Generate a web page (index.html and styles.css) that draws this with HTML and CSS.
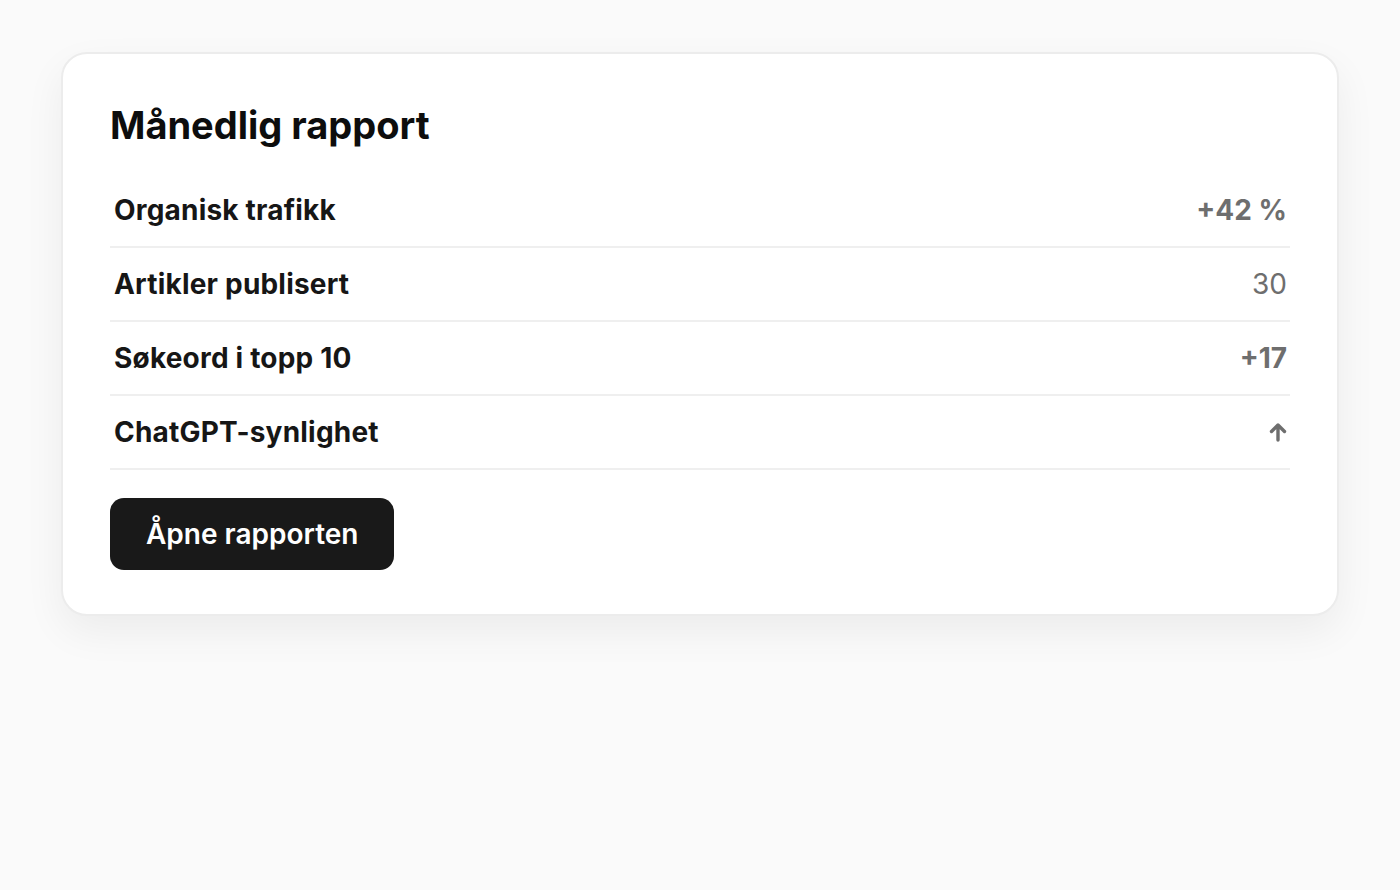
FILE: index.html
```html
<!DOCTYPE html>
<html lang="nb">
  <head>
    <meta charset="UTF-8" />
    <meta name="viewport" content="width=device-width, initial-scale=1.0" />
    <title>Månedlig rapport</title>
    <link rel="stylesheet" href="styles.css">
  </head>
  <body>
    <div class="report-card">
      <h1>Månedlig rapport</h1>

      <ul class="stats">
        <li class="stat-row">
          <span class="stat-label">Organisk trafikk</span>
          <span class="stat-value">+42 %</span>
        </li>
        <li class="stat-row">
          <span class="stat-label">Artikler publisert</span>
          <span class="stat-value light">30</span>
        </li>
        <li class="stat-row">
          <span class="stat-label">Søkeord i topp 10</span>
          <span class="stat-value">+17</span>
        </li>
        <li class="stat-row">
          <span class="stat-label">ChatGPT-synlighet</span>
          <span class="stat-value">
            <svg class="arrow-up" width="18" height="20" viewBox="0 0 18 20" fill="none">
              <path d="M9 18V3.5M2.5 9.5L9 3L15.5 9.5" stroke="currentColor" stroke-width="3.4" stroke-linecap="round" stroke-linejoin="round"/>
            </svg>
          </span>
        </li>
      </ul>

      <button type="button" class="open-btn">Åpne rapporten</button>
    </div>
  </body>
</html>
```

FILE: styles.css
```css
* {
  margin: 0;
  padding: 0;
  box-sizing: border-box;
}

body {
  font-family: Inter, "Noto Sans", sans-serif;
  background: #fafafa;
  color: #141414;
  padding: 52px 61px;
}

.report-card {
  background: #fff;
  border: 2px solid #ececec;
  border-radius: 26px;
  box-shadow: 0 16px 40px rgba(0, 0, 0, 0.06);
  padding: 47px 47px 44px;
}

h1 {
  font-size: 38px;
  font-weight: 700;
  letter-spacing: 0;
  line-height: 48px;
  color: #0d0d0d;
  margin-bottom: 25px;
}

.stats {
  list-style: none;
}

.stat-row {
  display: flex;
  justify-content: space-between;
  align-items: center;
  height: 74px;
  padding: 0 3px 0 4px;
  border-bottom: 2px solid #efefef;
}

.stat-label {
  font-size: 28px;
  font-weight: 700;
  letter-spacing: 0.2px;
  color: #161616;
}

.stat-value {
  font-size: 28px;
  font-weight: 700;
  letter-spacing: 0;
  color: #6e6e6e;
  display: flex;
  align-items: center;
}

.stat-value.light {
  font-weight: 400;
}

.arrow-up {
  display: block;
}

.open-btn {
  margin-top: 28px;
  background: #191919;
  color: #fff;
  border: none;
  border-radius: 14px;
  height: 72px;
  padding: 0 36px;
  font-family: inherit;
  font-size: 28px;
  font-weight: 600;
  letter-spacing: 0;
  cursor: pointer;
}
```
